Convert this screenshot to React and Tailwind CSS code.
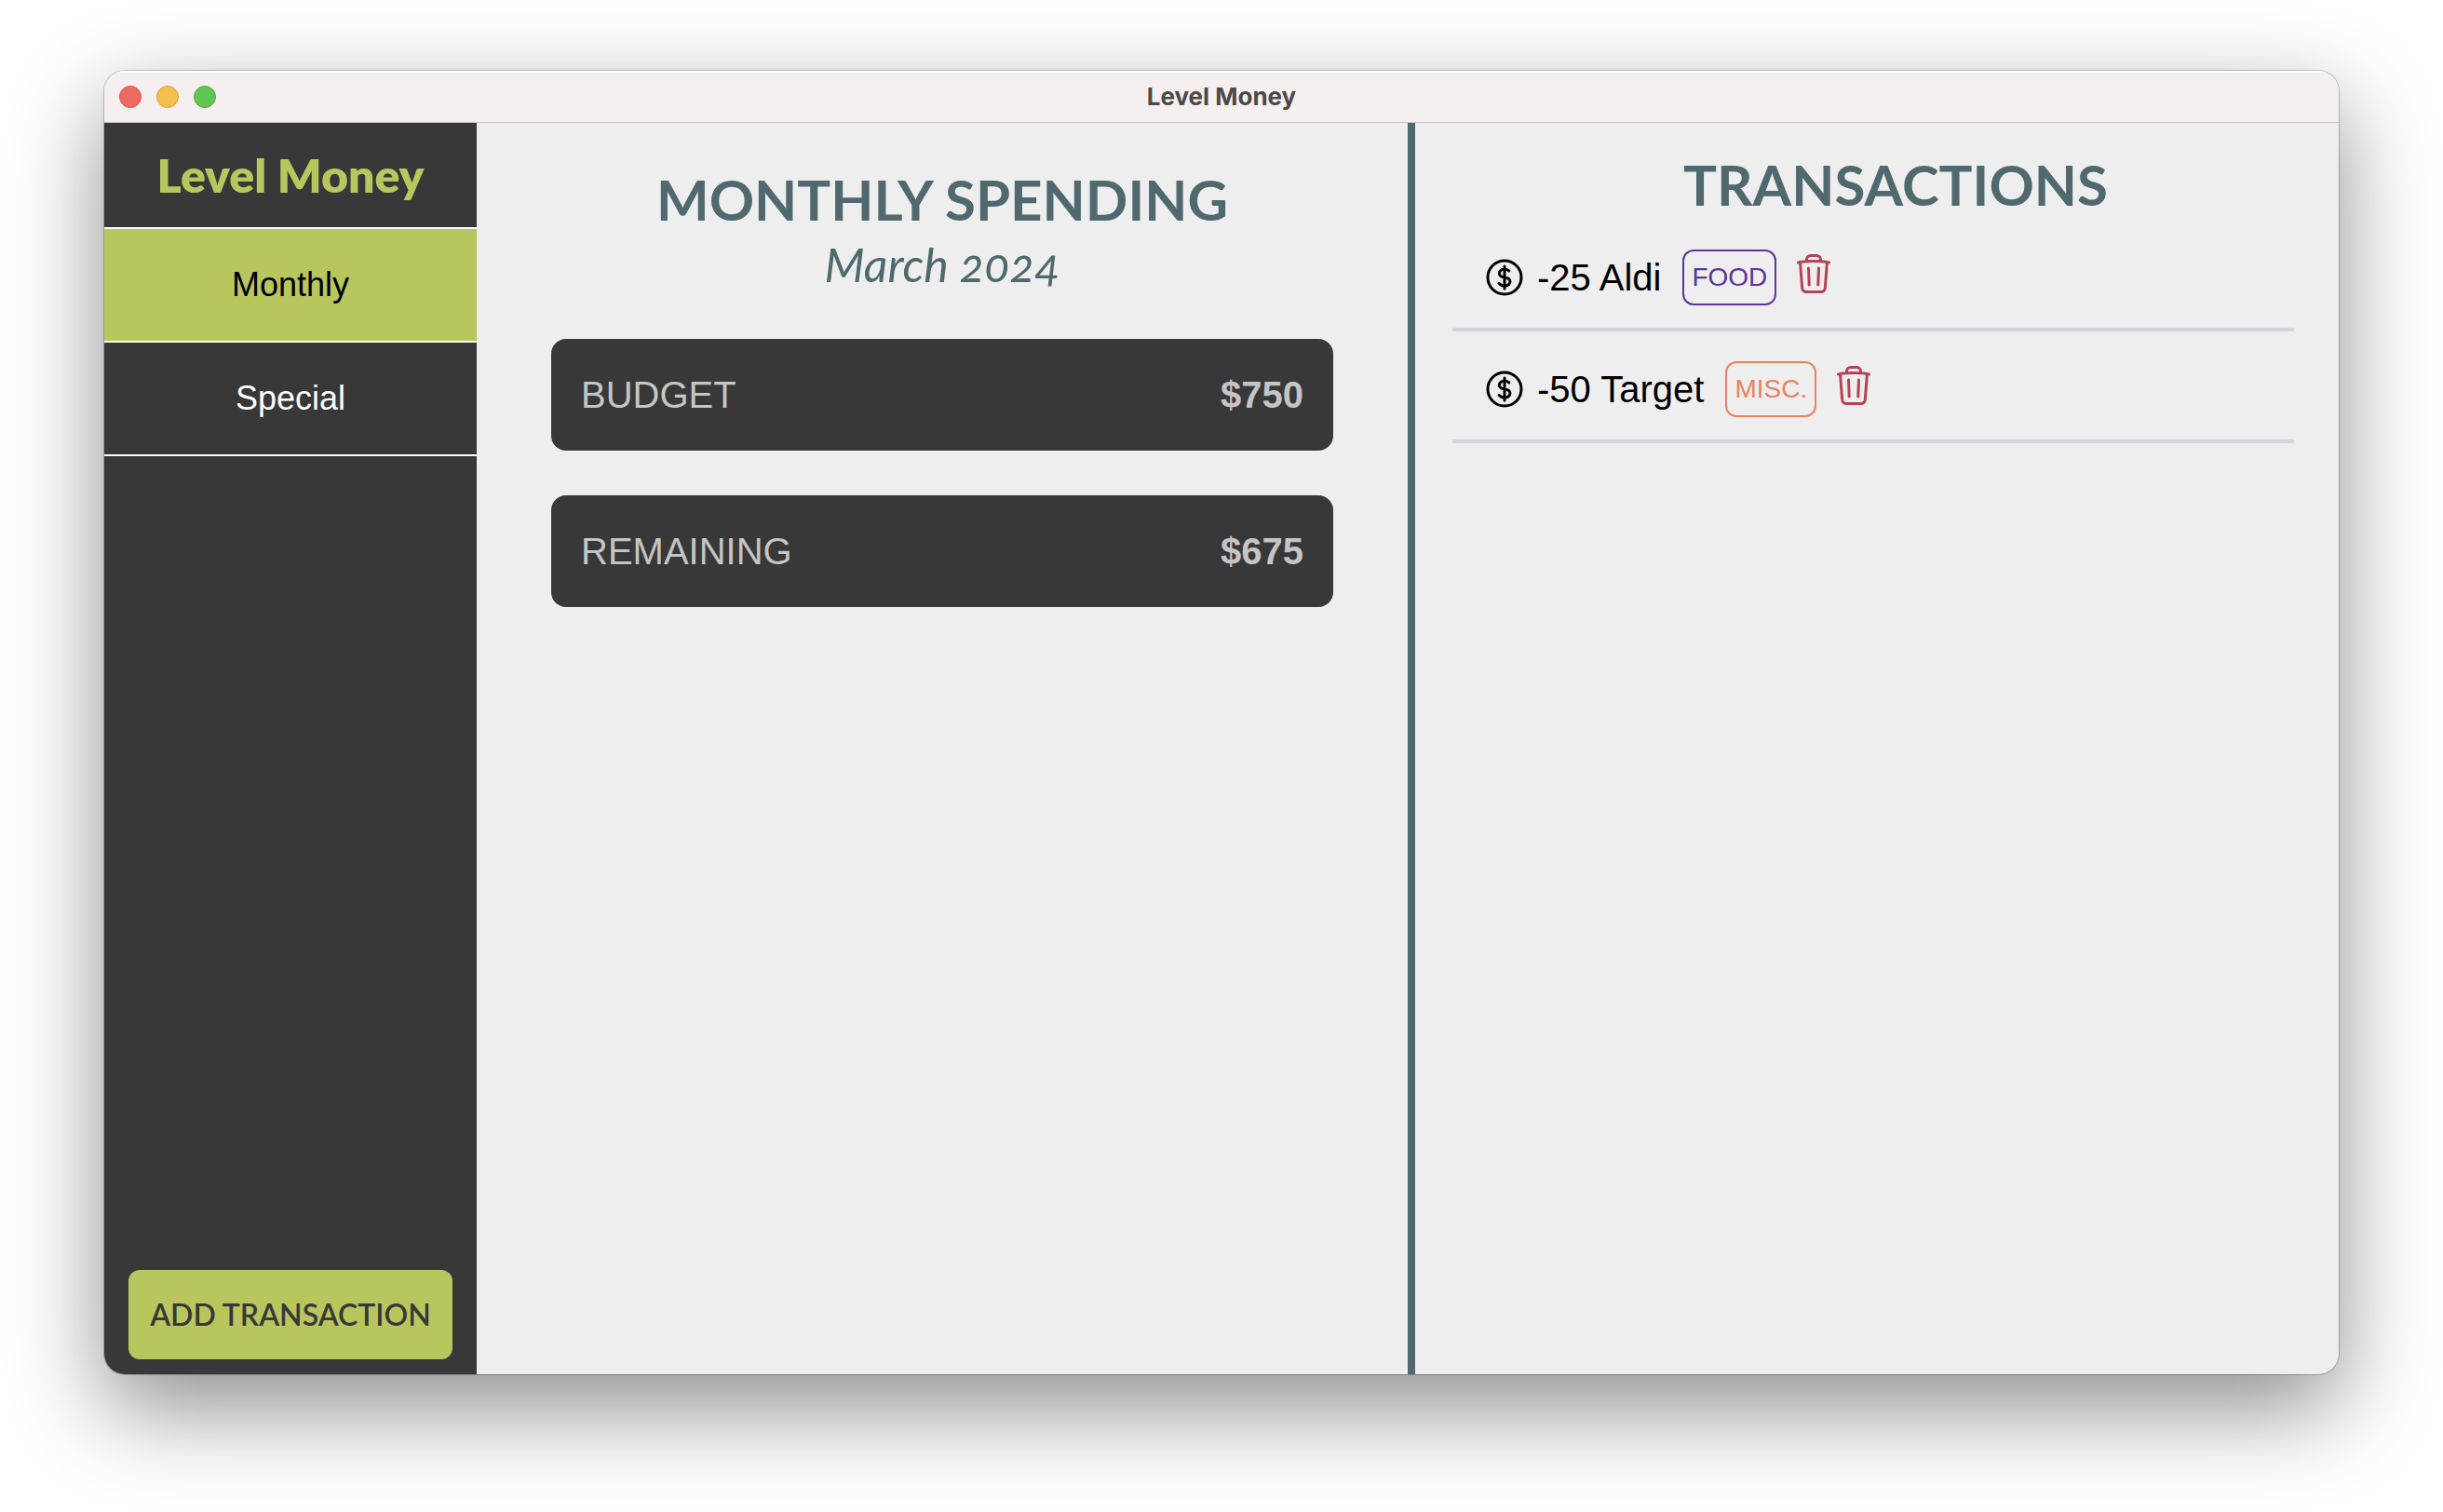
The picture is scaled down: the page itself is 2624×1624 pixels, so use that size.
import { HiOutlineCurrencyDollar, HiOutlineTrash } from "react-icons/hi2";

const tabs = [
  { name: "Monthly", active: true },
  { name: "Special", active: false },
];

const totals = [
  { label: "Budget", amount: "$750" },
  { label: "Remaining", amount: "$675" },
];

const transactions = [
  { amount: -25, place: "Aldi", tag: "FOOD", tone: "border-[#5e3596] text-[#5e3596]" },
  { amount: -50, place: "Target", tag: "MISC.", tone: "border-[#ea825f] text-[#ea825f]" },
];

function TitleBar() {
  return (
    <header className="grid h-14 shrink-0 grid-cols-[1fr_auto_1fr] items-center border-b border-[#c6c4c4] bg-[#f5efef] px-4 shadow-[inset_0_2px_0_#ffffff]">
      <div className="flex gap-4">
        <button aria-label="Close" className="size-6 rounded-full border border-[#d8574c] bg-[#ec6a5f]" />
        <button aria-label="Minimize" className="size-6 rounded-full border border-[#d9a23b] bg-[#f5bf4f]" />
        <button aria-label="Zoom" className="size-6 rounded-full border border-[#52a842] bg-[#61c554]" />
      </div>
      <p className="font-['Inter',sans-serif] text-[26px] font-bold text-[#4b4a48]">Level Money</p>
    </header>
  );
}

function Sidebar() {
  return (
    <aside className="flex w-100 shrink-0 flex-col bg-[#383838]">
      <div className="flex h-28 items-center justify-center">
        <h1 className="font-['Lato',sans-serif] text-[50px] font-extrabold text-[#b9c65e]">Level Money</h1>
      </div>
      <nav className="flex flex-col border-t-2 border-white">
        {tabs.map((tab) => (
          <button
            key={tab.name}
            className={`h-[122px] border-b-2 border-white text-[36px] ${
              tab.active ? "bg-[#b9c65e] text-black" : "text-white"
            }`}
          >
            {tab.name}
          </button>
        ))}
      </nav>
      <button className="mx-[26px] mt-auto mb-4 h-24 rounded-xl bg-[#b9c65e] font-['Lato',sans-serif] text-[32px] font-semibold whitespace-nowrap text-[#383838]">
        ADD TRANSACTION
      </button>
    </aside>
  );
}

function Spending() {
  return (
    <section className="w-[1008px] shrink border-r-8 border-[#50696e] px-20 pt-11">
      <div className="text-center font-['Lato',sans-serif] text-[#50696e]">
        <h2 className="text-[60px] leading-[76px] font-bold">MONTHLY SPENDING</h2>
        <p className="text-[50px] leading-[64px] italic oldstyle-nums">March 2024</p>
      </div>
      <dl className="mt-12 flex flex-col gap-12">
        {totals.map((total) => (
          <div
            key={total.label}
            className="flex h-30 items-center justify-between rounded-2xl bg-[#383838] px-8 text-[40px] text-[#c5c5c5]"
          >
            <dt className="uppercase">{total.label}</dt>
            <dd className="font-bold">{total.amount}</dd>
          </div>
        ))}
      </dl>
    </section>
  );
}

function Transactions() {
  return (
    <section className="flex-1 pt-7 pr-12 pl-10">
      <h2 className="pl-12 text-center font-['Lato',sans-serif] text-[60px] leading-[76px] font-bold text-[#50696e]">
        TRANSACTIONS
      </h2>
      <ul>
        {transactions.map((item) => (
          <li
            key={item.place}
            className="flex items-center border-b-4 border-[#d2d5da] px-8 pt-8 pb-6 text-[40px] leading-[60px] text-black"
          >
            <HiOutlineCurrencyDollar className="size-12" />
            <span className="ml-[11px]">
              {item.amount} {item.place}
            </span>
            <span className={`ml-[23px] flex h-15 items-center rounded-xl border-2 px-2 text-[28px] ${item.tone}`}>
              {item.tag}
            </span>
            <button aria-label={`Delete ${item.place}`} className="mb-2 ml-4 text-[#b44355]">
              <HiOutlineTrash className="size-12" />
            </button>
          </li>
        ))}
      </ul>
    </section>
  );
}

export default function App() {
  return (
    <div className="flex min-h-screen bg-white px-28 pt-[76px] pb-[148px] font-['Liberation_Sans',Arial,sans-serif]">
      <div className="flex flex-1 flex-col overflow-hidden rounded-[22px] bg-[#eeeeee] shadow-[0_0_0_1px_rgba(0,0,0,0.22),0_36px_100px_rgba(0,0,0,0.45)]">
        <TitleBar />
        <main className="flex flex-1">
          <Sidebar />
          <Spending />
          <Transactions />
        </main>
      </div>
    </div>
  );
}
